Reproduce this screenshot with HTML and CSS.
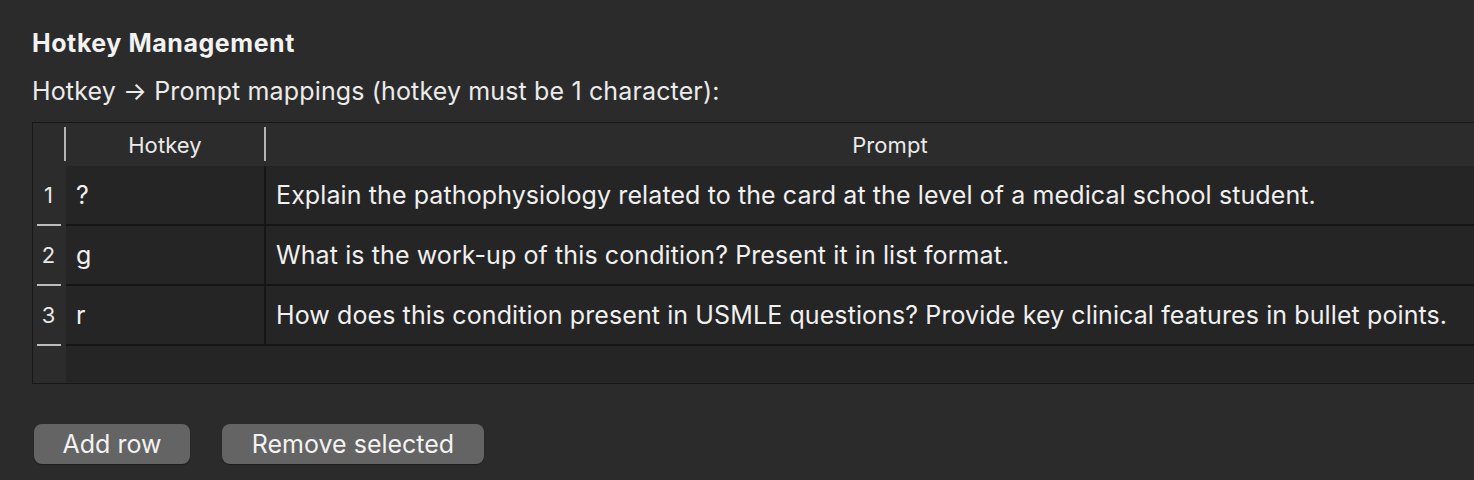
FILE: index.html
```html
<!DOCTYPE html>
<html lang="en">
<head>
  <meta charset="UTF-8" />
  <title>Hotkey Management</title>
  <link rel="stylesheet" href="styles.css">
</head>
<body>
  <div class="page">
    <h2 class="section-title">Hotkey Management</h2>
    <div class="section-label">Hotkey → Prompt mappings (hotkey must be 1 character):</div>

    <div class="table">
      <div class="row header">
        <div class="vhead corner"></div>
        <div class="cell hotkey">Hotkey</div>
        <div class="cell prompt">Prompt</div>
      </div>

      <div class="row">
        <div class="vhead">1</div>
        <div class="cell hotkey">?</div>
        <div class="cell prompt">Explain the pathophysiology related to the card at the level of a medical school student.</div>
      </div>
      <div class="row">
        <div class="vhead">2</div>
        <div class="cell hotkey">g</div>
        <div class="cell prompt">What is the work-up of this condition? Present it in list format.</div>
      </div>
      <div class="row">
        <div class="vhead">3</div>
        <div class="cell hotkey">r</div>
        <div class="cell prompt">How does this condition present in USMLE questions? Provide key clinical features in bullet points.</div>
      </div>

      <div class="row filler">
        <div class="vhead"></div>
        <div class="cell wide"></div>
      </div>
    </div>

    <div class="buttons">
      <button class="btn add-btn">Add row</button>
      <button class="btn remove-btn">Remove selected</button>
    </div>
  </div>
</body>
</html>
```

FILE: styles.css
```css
html, body {
  margin: 0;
  padding: 0;
  background-color: #2b2b2b;
  overflow: hidden;
}

body {
  font-family: Inter, "Noto Sans", sans-serif;
  color: #ededed;
  height: 480px;
}

.page {
  padding: 28px 0 0 32px;
}

.section-title {
  margin: 0;
  font-size: 25px;
  line-height: 30px;
  font-weight: 700;
  letter-spacing: 0.55px;
  color: #f2f2f2;
}

.section-label {
  margin-top: 18px;
  font-size: 25px;
  line-height: 30px;
  letter-spacing: 0.14px;
  color: #ebebeb;
}

/* table */
.table {
  margin-top: 16px;
  width: 1500px;
  border: 1px solid #171717;
  border-right: none;
  background-color: #2c2c2c;
}

.row {
  display: grid;
  grid-template-columns: 33px 200px 1248px;
  height: 60px;
}

.row .vhead {
  position: relative;
  display: flex;
  align-items: center;
  justify-content: center;
  padding-right: 2px;
  padding-bottom: 2px;
  background-color: #2c2c2c;
  font-size: 22px;
  color: #e8e8e8;
}

.row .vhead::after {
  content: "";
  position: absolute;
  left: 4px;
  right: 5px;
  bottom: 0;
  height: 2px;
  background-color: #bcbcbc;
}

.row .cell {
  display: flex;
  align-items: center;
  padding-left: 10px;
  background-color: #252525;
  border-bottom: 2px solid #151515;
  font-size: 25px;
  letter-spacing: 0.1px;
  color: #f0f0f0;
}

.row .cell.hotkey {
  border-right: 2px solid #151515;
}

/* header row */
.row.header {
  height: 43px;
}

.row.header .cell,
.row.header .vhead {
  position: relative;
  justify-content: center;
  padding-left: 0;
  padding-right: 0;
  padding-bottom: 0;
  background-color: #2c2c2c;
  border: none;
  font-size: 22px;
  color: #eaeaea;
}

.row.header .vhead::after,
.row.header .cell.hotkey::after {
  content: "";
  position: absolute;
  top: 4px;
  bottom: 5px;
  right: 0;
  left: auto;
  width: 2px;
  height: auto;
  background-color: #b4b4b4;
}

.row.header .cell.hotkey {
  padding-right: 2px;
}

/* empty area below the rows */
.row.filler {
  grid-template-columns: 33px 1448px;
  height: 37px;
}

.row.filler .vhead::after {
  display: none;
}

.row.filler .cell {
  border: none;
}

/* buttons */
.buttons {
  display: flex;
  gap: 32px;
  margin-top: 40px;
  padding-left: 2px;
}

.btn {
  height: 40px;
  padding: 0;
  border: none;
  border-radius: 8px;
  background-color: #646464;
  color: #f2f2f2;
  font-family: Inter, "Noto Sans", sans-serif;
  font-size: 25px;
  box-shadow: 0 1px 1px rgba(0, 0, 0, 0.35);
  cursor: pointer;
}

.add-btn {
  width: 156px;
}

.remove-btn {
  width: 262px;
}
```
